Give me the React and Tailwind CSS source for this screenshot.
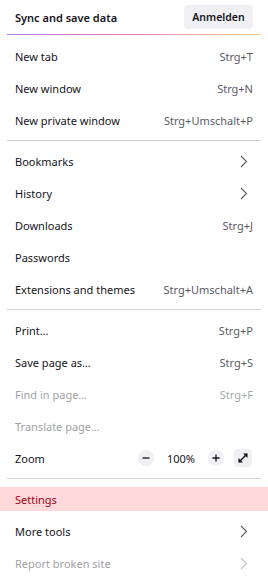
import React from "react";

const font = { fontFamily: '"Noto Sans", "Open Sans", sans-serif' };

function Chevron({ disabled }) {
  return (
    <svg width="8" height="13" viewBox="0 0 8 13" className="mr-[5px]">
      <path
        d="M1 1 L6.5 6.5 L1 12"
        fill="none"
        stroke={disabled ? "#c4c4cc" : "#5b5b66"}
        strokeWidth="1.1"
      />
    </svg>
  );
}

function Item({ label, shortcut, chevron, disabled, highlight }) {
  return (
    <div
      className={
        "flex h-6 my-1 shrink-0 items-center justify-between px-[15px] " +
        (highlight ? "bg-[#ffd9dc]" : "")
      }
    >
      <span
        className={
          highlight
            ? "text-[#a4000f]"
            : disabled
            ? "text-[#9f9fa8]"
            : "text-[#15141a]"
        }
      >
        {label}
      </span>
      {shortcut && (
        <span className={disabled ? "text-[#a8a8b0]" : "text-[#5b5b66]"}>
          {shortcut}
        </span>
      )}
      {chevron && <Chevron disabled={disabled} />}
    </div>
  );
}

function Sep() {
  return <div className="mx-[7px] my-1 h-px shrink-0 bg-[#cfcfd8]" />;
}

export default function App() {
  return (
    <div
      className="flex flex-col w-[268px] h-[579px] bg-white text-[11px] leading-none overflow-hidden"
      style={font}
    >
      <div className="flex shrink-0 items-center justify-between pl-[15px] pr-[15px] pt-[5px] h-[29px]">
        <span className="font-semibold text-[#15141a]">Sync and save data</span>
        <div className="flex h-6 w-[69px] items-center justify-center rounded bg-[#f0f0f4] text-[10.5px] font-semibold text-[#15141a]">
          Anmelden
        </div>
      </div>
      <div className="mx-[7px] mt-[5px] mb-[5px] h-px shrink-0 bg-gradient-to-r from-[#b07ae8] via-[#f07ab8] to-[#ffd27a]" />
      <Item label="New tab" shortcut="Strg+T" />
      <Item label="New window" shortcut="Strg+N" />
      <Item label="New private window" shortcut="Strg+Umschalt+P" />
      <Sep />
      <Item label="Bookmarks" chevron />
      <Item label="History" chevron />
      <Item label="Downloads" shortcut="Strg+J" />
      <Item label="Passwords" />
      <Item label="Extensions and themes" shortcut="Strg+Umschalt+A" />
      <Sep />
      <Item label="Print…" shortcut="Strg+P" />
      <Item label="Save page as…" shortcut="Strg+S" />
      <Item label="Find in page…" shortcut="Strg+F" disabled />
      <Item label="Translate page…" disabled />
      <div className="flex h-6 my-1 shrink-0 items-center justify-between pl-[15px] pr-[16px]">
        <span className="text-[#15141a]">Zoom</span>
        <div className="flex items-center">
          <div className="flex h-4 w-4 items-center justify-center rounded-full bg-[#f0f0f4]">
            <svg width="8" height="8" viewBox="0 0 8 8">
              <path d="M0.5 4 H7.5" stroke="#15141a" strokeWidth="1.3" />
            </svg>
          </div>
          <span className="mx-[13px] text-[#15141a]">100%</span>
          <div className="flex h-4 w-4 items-center justify-center rounded-full bg-[#f0f0f4]">
            <svg width="8" height="8" viewBox="0 0 8 8">
              <path d="M0.5 4 H7.5 M4 0.5 V7.5" stroke="#15141a" strokeWidth="1.3" />
            </svg>
          </div>
          <div className="ml-[10px] flex h-[18px] w-[18px] items-center justify-center rounded-sm bg-[#f0f0f4]">
            <svg width="12" height="12" viewBox="0 0 12 12">
              <path d="M2 10 L10 2" stroke="#15141a" strokeWidth="1.4" />
              <path d="M6 1.5 H10.5 V6 Z" fill="#15141a" />
              <path d="M1.5 6 V10.5 H6 Z" fill="#15141a" />
            </svg>
          </div>
        </div>
      </div>
      <Sep />
      <Item label="Settings" highlight />
      <Item label="More tools" chevron />
      <Item label="Report broken site" chevron disabled />
    </div>
  );
}
